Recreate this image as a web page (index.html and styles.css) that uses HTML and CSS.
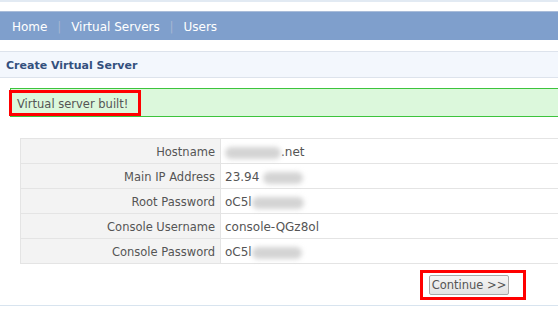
FILE: index.html
```html
<!DOCTYPE html>
<html lang="en">
<head>
    <meta charset="UTF-8">
    <meta name="viewport" content="width=device-width, initial-scale=1.0">
    <title>Create Virtual Server</title>
    <link rel="stylesheet" href="styles.css">
</head>
<body>
    <div class="topline"></div>
    <div class="nav">
        <a href="#">Home</a>
        <span class="sep">|</span>
        <a href="#">Virtual Servers</a>
        <span class="sep">|</span>
        <a href="#">Users</a>
    </div>

    <h1 class="title">Create Virtual Server</h1>

    <div class="notice">
        <span class="marked msg">Virtual server built!</span>
    </div>

    <table class="details">
        <tr>
            <th>Hostname</th>
            <td><span class="blur w56"></span>.net</td>
        </tr>
        <tr>
            <th>Main IP Address</th>
            <td>23.94 <span class="blur w40"></span></td>
        </tr>
        <tr>
            <th>Root Password</th>
            <td>oC5l<span class="blur w52"></span></td>
        </tr>
        <tr>
            <th>Console Username</th>
            <td>console-QGz8ol</td>
        </tr>
        <tr>
            <th>Console Password</th>
            <td>oC5l<span class="blur w50"></span></td>
        </tr>
    </table>

    <div class="actions">
        <span class="marked btnwrap"><button type="button">Continue &gt;&gt;</button></span>
    </div>
    <div class="bottomline"></div>
</body>
</html>
```

FILE: styles.css
```css
body {
    margin: 0;
    font-family: "DejaVu Sans", Verdana, sans-serif;
    font-size: 11.5px;
    color: #555;
    background: #fff;
    overflow: hidden;
}

.topline {
    height: 2px;
    background-color: #e2eaf3;
    margin-bottom: 9px;
}

.nav {
    background-color: #7f9fcc;
    border-top: 1px solid #a9bcd9;
    height: 27px;
    padding: 1px 0 0 12px;
    line-height: 28px;
    font-size: 12px;
}

.nav a {
    color: #fff;
    text-decoration: none;
}

.nav .sep {
    color: #a4b6d2;
    margin: 0 6px;
}

.title {
    margin: 11px 0 0;
    height: 24px;
    padding: 1px 0 0 6px;
    line-height: 25px;
    background-color: #f3f7fd;
    border-top: 1px solid #dde3ec;
    border-bottom: 1px solid #dde3ec;
    color: #34507e;
    font-size: 11px;
    font-weight: bold;
}

.notice {
    margin: 10px 0 0 10px;
    padding-top: 1px;
    background-color: #dcf8dc;
    border-top: 1px solid #3cc43c;
    border-bottom: 1px solid #3cc43c;
    border-left: 1px solid #3cc43c;
}

.marked {
    display: inline-block;
    border: 3px solid #f00;
}

.msg {
    margin-left: -2px;
    height: 19px;
    padding: 1px 10px 0 5px;
    line-height: 20px;
    vertical-align: top;
}

.details {
    margin: 21px 0 0 20px;
    width: 560px;
    border-collapse: collapse;
}

.details th,
.details td {
    height: 22px;
    padding: 2px 4px 0;
    border: 1px solid #e4e4e4;
    white-space: nowrap;
}

.details th {
    width: 190px;
    padding-right: 5px;
    text-align: right;
    font-weight: normal;
    background-color: #f3f3f3;
}

.details td {
    font-size: 12px;
}

.blur {
    display: inline-block;
    height: 12px;
    vertical-align: middle;
    background-color: #d4d4d4;
    border-radius: 6px;
    filter: blur(2.5px);
}

.w40 { width: 40px; }
.w50 { width: 50px; }
.w52 { width: 52px; }
.w56 { width: 56px; }

.actions {
    display: flex;
    justify-content: flex-end;
    padding: 6px 32px 0 0;
}

.btnwrap {
    padding: 2px 14px 2px 6px;
}

.btnwrap button {
    display: block;
    width: 80px;
    height: 20px;
    padding: 0;
    font-family: "DejaVu Sans", Verdana, sans-serif;
    font-size: 11.5px;
    color: #555;
    background: linear-gradient(#f6f6f6, #e2e2e2);
    border: 1px solid #a8a8a8;
    border-radius: 2px;
}

.bottomline {
    margin-top: 5px;
    height: 1px;
    background-color: #d8e4ef;
}
```
